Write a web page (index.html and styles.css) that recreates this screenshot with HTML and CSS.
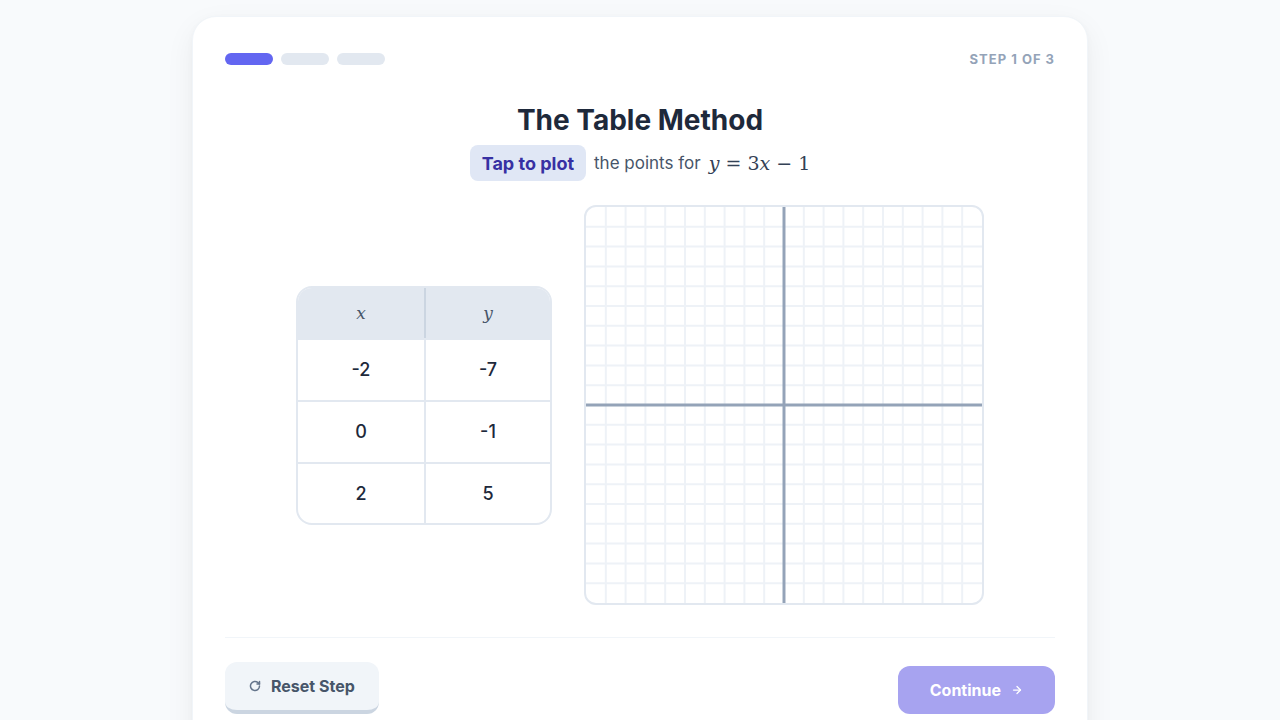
FILE: index.html
```html
<!DOCTYPE html>
<html lang="en">
<head>
<meta charset="utf-8">
<title>The Table Method</title>
<link rel="stylesheet" href="styles.css">
</head>
<body>
<main class="card">
  <header class="card-head">
    <div class="progress">
      <span class="seg seg-active"></span>
      <span class="seg"></span>
      <span class="seg"></span>
    </div>
    <div class="step">STEP 1 OF 3</div>
  </header>

  <h1 class="title">The Table Method</h1>
  <div class="subtitle">
    <span class="pill">Tap to plot</span>
    <span class="sub-text">the points for</span>
    <span class="math"><i>y</i> = 3<i>x</i> − 1</span>
  </div>

  <section class="work">
    <div class="table">
      <div class="row head">
        <div class="cell"><i>x</i></div>
        <div class="cell"><i>y</i></div>
      </div>
      <div class="row">
        <div class="cell">-2</div>
        <div class="cell">-7</div>
      </div>
      <div class="row">
        <div class="cell">0</div>
        <div class="cell">-1</div>
      </div>
      <div class="row">
        <div class="cell">2</div>
        <div class="cell">5</div>
      </div>
    </div>

    <div class="graph">
      <svg class="grid" viewBox="0 0 400 400" width="396" height="396">
        <g stroke="#eef2f7" stroke-width="2">
          <line x1="20" y1="0" x2="20" y2="400"/><line x1="40" y1="0" x2="40" y2="400"/>
          <line x1="60" y1="0" x2="60" y2="400"/><line x1="80" y1="0" x2="80" y2="400"/>
          <line x1="100" y1="0" x2="100" y2="400"/><line x1="120" y1="0" x2="120" y2="400"/>
          <line x1="140" y1="0" x2="140" y2="400"/><line x1="160" y1="0" x2="160" y2="400"/>
          <line x1="180" y1="0" x2="180" y2="400"/><line x1="220" y1="0" x2="220" y2="400"/>
          <line x1="240" y1="0" x2="240" y2="400"/><line x1="260" y1="0" x2="260" y2="400"/>
          <line x1="280" y1="0" x2="280" y2="400"/><line x1="300" y1="0" x2="300" y2="400"/>
          <line x1="320" y1="0" x2="320" y2="400"/><line x1="340" y1="0" x2="340" y2="400"/>
          <line x1="360" y1="0" x2="360" y2="400"/><line x1="380" y1="0" x2="380" y2="400"/>
          <line y1="20" x1="0" y2="20" x2="400"/><line y1="40" x1="0" y2="40" x2="400"/>
          <line y1="60" x1="0" y2="60" x2="400"/><line y1="80" x1="0" y2="80" x2="400"/>
          <line y1="100" x1="0" y2="100" x2="400"/><line y1="120" x1="0" y2="120" x2="400"/>
          <line y1="140" x1="0" y2="140" x2="400"/><line y1="160" x1="0" y2="160" x2="400"/>
          <line y1="180" x1="0" y2="180" x2="400"/><line y1="220" x1="0" y2="220" x2="400"/>
          <line y1="240" x1="0" y2="240" x2="400"/><line y1="260" x1="0" y2="260" x2="400"/>
          <line y1="280" x1="0" y2="280" x2="400"/><line y1="300" x1="0" y2="300" x2="400"/>
          <line y1="320" x1="0" y2="320" x2="400"/><line y1="340" x1="0" y2="340" x2="400"/>
          <line y1="360" x1="0" y2="360" x2="400"/><line y1="380" x1="0" y2="380" x2="400"/>
        </g>
        <g stroke="#94a3b8" stroke-width="3">
          <line x1="200" y1="0" x2="200" y2="400"/>
          <line x1="0" y1="200" x2="400" y2="200"/>
        </g>
      </svg>
    </div>
  </section>

  <footer class="card-foot">
    <button class="btn btn-reset" type="button">
      <svg class="ico" viewBox="0 0 24 24" width="12" height="12" fill="none" stroke="currentColor" stroke-width="3" stroke-linecap="round" stroke-linejoin="round">
        <path d="M21 12a9 9 0 1 1-3-6.7L21 8"/>
        <path d="M21 3v5h-5"/>
      </svg>
      <span>Reset Step</span>
    </button>
    <button class="btn btn-continue" type="button">
      <span>Continue</span>
      <svg class="ico" viewBox="0 0 24 24" width="12" height="12" fill="none" stroke="currentColor" stroke-width="2.5" stroke-linecap="round" stroke-linejoin="round">
        <path d="M5 12h14"/>
        <path d="M12 5l7 7-7 7"/>
      </svg>
    </button>
  </footer>
</main>
</body>
</html>
```

FILE: styles.css
```css
* { box-sizing: border-box; }

html, body {
  margin: 0;
  padding: 0;
  background: #f8fafc;
  font-family: Inter, "Noto Sans", "Liberation Sans", sans-serif;
  color: #1e293b;
}

body {
  height: 720px;
  overflow: hidden;
}

.card {
  width: 896px;
  margin: 16px auto 0;
  background: #ffffff;
  border: 1px solid #f1f5f9;
  border-radius: 24px;
  box-shadow: 0 10px 30px rgba(15, 23, 42, 0.06), 0 2px 6px rgba(15, 23, 42, 0.03);
  padding: 32px 32px 40px;
}

.card-head {
  display: flex;
  justify-content: space-between;
  align-items: center;
  height: 20px;
}

.progress {
  display: flex;
  gap: 8px;
}

.seg {
  width: 48px;
  height: 12px;
  border-radius: 6px;
  background: #e2e8f0;
}

.seg-active { background: #6366f1; }

.step {
  font-size: 13px;
  font-weight: 700;
  letter-spacing: 1px;
  color: #94a3b8;
}

.title {
  margin: 33px 0 0;
  text-align: center;
  font-size: 28px;
  line-height: 36px;
  font-weight: 700;
  letter-spacing: 0;
  color: #1e293b;
}

.subtitle {
  display: flex;
  justify-content: center;
  align-items: center;
  gap: 8px;
  margin-top: 7px;
  height: 36px;
}

.pill {
  display: inline-flex;
  align-items: center;
  height: 36px;
  padding: 0 12px;
  border-radius: 8px;
  background: #e0e7f5;
  color: #3730a3;
  font-size: 18px;
  font-weight: 700;
}

.sub-text {
  font-size: 17px;
  color: #475569;
}

.math {
  font-family: "DejaVu Serif", "Liberation Serif", serif;
  font-size: 19px;
  color: #334155;
  word-spacing: 0;
}

.work {
  display: flex;
  justify-content: center;
  align-items: center;
  gap: 32px;
  margin-top: 24px;
}

.table {
  width: 256px;
  border: 2px solid #e2e8f0;
  border-radius: 16px;
  overflow: hidden;
}

.row {
  display: grid;
  grid-template-columns: 1fr 1fr;
  height: 62px;
  border-top: 2px solid #e2e8f0;
}

.row:last-child { height: 61px; }

.row.head {
  height: 50px;
  border-top: none;
  background: #e2e8f0;
}

.cell {
  display: flex;
  align-items: center;
  justify-content: center;
  font-size: 18px;
  font-weight: 500;
  color: #1e293b;
}

.cell + .cell { border-left: 2px solid #e2e8f0; }

.head .cell {
  font-family: "DejaVu Serif", "Liberation Serif", serif;
  font-weight: 400;
  font-size: 17px;
  color: #475569;
}

.head .cell + .cell { border-left-color: #cbd5e1; }

.graph {
  width: 400px;
  height: 400px;
  border: 2px solid #e2e8f0;
  border-radius: 12px;
  overflow: hidden;
  background: #ffffff;
}

.grid { display: block; }

.card-foot {
  display: flex;
  justify-content: space-between;
  align-items: flex-end;
  margin-top: 32px;
  padding-top: 24px;
  border-top: 1px solid #f1f5f9;
}

.btn {
  display: inline-flex;
  align-items: center;
  gap: 10px;
  border: none;
  font-family: Inter, "Noto Sans", "Liberation Sans", sans-serif;
  font-size: 16px;
  font-weight: 700;
  border-radius: 12px;
  cursor: pointer;
}

.btn-reset {
  height: 52px;
  padding: 0 24px;
  background: #f1f5f9;
  color: #475569;
  border-bottom: 4px solid #cbd5e1;
}

.btn-reset .ico { color: #64748b; }

.btn-continue {
  height: 48px;
  padding: 0 32px;
  background: #a7a3f0;
  color: #ffffff;
}
```
